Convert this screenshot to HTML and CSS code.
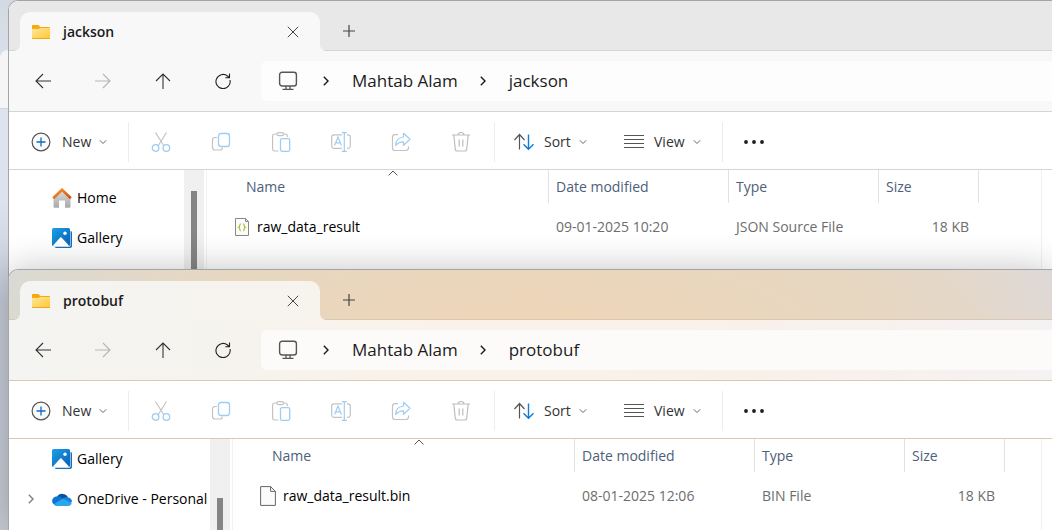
FILE: index.html
```
<!DOCTYPE html>
<html lang="en">
<head>
<meta charset="utf-8">
<title>File Explorer</title>
<link rel="stylesheet" href="styles.css">
</head>
<body>
<svg class="defs" aria-hidden="true">
  <defs>
    <linearGradient id="g-folder" x1="0" y1="0" x2="1" y2="1"><stop offset="0" stop-color="#ffe6a0"/><stop offset="1" stop-color="#ffc82e"/></linearGradient>
    <linearGradient id="g-roof" x1="0" y1="0" x2="1" y2="1"><stop offset="0" stop-color="#f79a2a"/><stop offset="1" stop-color="#d04a12"/></linearGradient>
    <linearGradient id="g-wall" x1="0" y1="0" x2="0" y2="1"><stop offset="0" stop-color="#dcdcdc"/><stop offset="1" stop-color="#a9a9a9"/></linearGradient>
    <linearGradient id="g-photo" x1="0" y1="0" x2="1" y2="1"><stop offset="0" stop-color="#1ba0e8"/><stop offset="1" stop-color="#0a5fb4"/></linearGradient>
  </defs>
  <symbol id="folder" viewBox="0 0 20 16"><path d="M1 2C1 1.400 1.400 1 2 1h5.400c.4 0 .7.400.9.800L9 3h9c.6 0 1 .4 1 1v3H1z" fill="#f6a912"/><path d="M1 5h6.500L9 4h10v10.300c0 .4-.3.700-.7.700H1.700c-.4 0-.7-.3-.7-.7z" fill="url(#g-folder)"/><path d="M1 14h18v.3c0 .4-.3.700-.7.700H1.700c-.4 0-.7-.3-.7-.7z" fill="#eda81c"/></symbol>
  <symbol id="close" viewBox="0 0 12 12"><path d="M.8.800l10.400 10.400M11.200.8L.8 11.200" stroke="#444" stroke-width="1" fill="none"/></symbol>
  <symbol id="plus" viewBox="0 0 12 12"><path d="M6 0v12M0 6h12" stroke="#444" stroke-width="1.200" fill="none"/></symbol>
  <symbol id="back" viewBox="0 0 16 16"><path d="M16 8H1M8 1L1 8l7 7" stroke="currentColor" stroke-width="1.100" fill="none"/></symbol>
  <symbol id="forward" viewBox="0 0 16 16"><path d="M0 8h15M8 1l7 7-7 7" stroke="currentColor" stroke-width="1.100" fill="none"/></symbol>
  <symbol id="up" viewBox="0 0 16 16"><path d="M8 16V1M1 8l7-7 7 7" stroke="currentColor" stroke-width="1.100" fill="none"/></symbol>
  <symbol id="refresh" viewBox="0 0 16 16"><path d="M15 7A7.100 7.100 0 1 1 12.500 3L14.200 4.500M14.500 .5V4.700H10.300" stroke="#222" stroke-width="1.100" fill="none"/></symbol>
  <symbol id="monitor" viewBox="0 0 20 20"><rect x="1.600" y="1.200" width="16.800" height="13.800" rx="2.500" stroke="#555" stroke-width="1.400" fill="none"/><path d="M8 15v3M12 15v3M4.500 18.400h11" stroke="#555" stroke-width="1.300" fill="none"/></symbol>
  <symbol id="crumb" viewBox="0 0 6 10"><path d="M.8.800L5 5 .8 9.200" stroke="currentColor" stroke-width="1.400" fill="none"/></symbol>
  <symbol id="drop" viewBox="0 0 8 6"><path d="M.8 1.300L4 4.500l3.200-3.200" stroke="#666" fill="none"/></symbol>
  <symbol id="add" viewBox="0 0 20 20"><circle cx="10" cy="10" r="8.900" fill="#fafafa" stroke="#555" stroke-width="1.200"/><path d="M10 5.500v9M5.500 10h9" stroke="#0f6cbd" stroke-width="1.300"/></symbol>
  <symbol id="cut" viewBox="0 0 20 20"><path d="M4.500.5L13 14M15.500.5L7 14" stroke="#c3c3c3" stroke-width="1.200"/><circle cx="4.600" cy="16" r="3.300" fill="none" stroke="#9dcdf3" stroke-width="1.300"/><circle cx="15.400" cy="16" r="3.300" fill="none" stroke="#9dcdf3" stroke-width="1.300"/></symbol>
  <symbol id="copy" viewBox="0 0 20 20"><path d="M6 5.500H4a2.500 2.500 0 0 0-2.500 2.500v7.500A2.500 2.500 0 0 0 4 18h5a2.500 2.500 0 0 0 2.500-2.300" fill="none" stroke="#c3c3c3" stroke-width="1.200"/><rect x="7.500" y="1.500" width="11" height="13" rx="2.500" fill="none" stroke="#9dcdf3" stroke-width="1.300"/></symbol>
  <symbol id="paste" viewBox="0 0 20 20"><path d="M7.500 19H3.500A2 2 0 0 1 1.600 17V4A2 2 0 0 1 3.500 2H6M12 2h2.500A2 2 0 0 1 16.400 4v1" fill="none" stroke="#c3c3c3" stroke-width="1.200"/><rect x="6" y=".7" width="6.500" height="3" rx="1.500" fill="none" stroke="#c3c3c3" stroke-width="1.200"/><rect x="9.500" y="6.700" width="9.200" height="12.600" rx="1.500" fill="none" stroke="#9dcdf3" stroke-width="1.300"/></symbol>
  <symbol id="rename" viewBox="0 0 20 20"><path d="M11 2.800H3A2.300 2.300 0 0 0 .7 5v9A2.300 2.300 0 0 0 3 16.300h8M16 2.800h1A2.300 2.300 0 0 1 19.300 5v9a2.300 2.300 0 0 1-2.300 2.300h-1" fill="none" stroke="#c3c3c3" stroke-width="1.200"/><path d="M3.500 13.500L7 5l3.500 8.500M4.800 10.800h4.400M10.800.6h5M10.800 19.400h5M13.300.6v18.800" fill="none" stroke="#9dcdf3" stroke-width="1.200"/></symbol>
  <symbol id="share" viewBox="0 0 20 20"><path d="M7 2.600H4A2.500 2.500 0 0 0 1.500 5v11A2.500 2.500 0 0 0 4 18.500h11a2.500 2.500 0 0 0 2.500-2.400v-1.500" fill="none" stroke="#c3c3c3" stroke-width="1.200"/><path d="M12.500 1.300l6.500 6-6.500 6V9.800c-3.500 0-5.700 1-7.800 3.700 0-4.500 2.800-8 7.800-8.500z" fill="none" stroke="#9dcdf3" stroke-width="1.200" stroke-linejoin="round"/></symbol>
  <symbol id="trash" viewBox="0 0 20 20"><path d="M1 3h18M7 3a3 2.500 0 0 1 6 0M2.800 3l1.500 14.500A2 2 0 0 0 6.300 19h7.400a2 2 0 0 0 2-1.500L17.200 3M8.200 7.500v7M11.800 7.500v7" fill="none" stroke="#bdbdbd" stroke-width="1.200"/></symbol>
  <symbol id="sort" viewBox="0 0 20 20"><path d="M5.500 17.500V2.500M.5 8l5-5.500 5 5.500" fill="none" stroke="#555" stroke-width="1.200"/><path d="M14.500 2.500v15M9.500 12.300l5 5 5-5" fill="none" stroke="#0f7bd8" stroke-width="1.400"/></symbol>
  <symbol id="lines" viewBox="0 0 20 20"><path d="M0 3.500h20M0 7.500h20M0 11.500h20M0 15.500h20" stroke="#555" stroke-width="1.100"/></symbol>
  <symbol id="dots" viewBox="0 0 20 4"><circle cx="2" cy="2" r="1.900"/><circle cx="10" cy="2" r="1.900"/><circle cx="18" cy="2" r="1.900"/></symbol>
  <symbol id="home" viewBox="0 0 20 20"><path d="M1.500 9L10 2l8.500 7v9.500c0 .8-.5 1.300-1.300 1.300H13v-7.300H7v7.300H2.800c-.8 0-1.300-.5-1.300-1.300z" fill="url(#g-wall)"/><path d="M1.200 10.300L10 1.700l8.800 8.600" fill="none" stroke="url(#g-roof)" stroke-width="2.600"/></symbol>
  <symbol id="gallery" viewBox="0 0 20 20"><path d="M4 3h14.500c.9 0 1.500.6 1.500 1.500V18c0 1.200-.8 2-2 2H4.500C3.300 20 2.500 19.200 2.500 18z" fill="#1370c0"/><rect x="0" y="0" width="18.500" height="18.700" rx="1.500" fill="#fff"/><rect x="0" y="0" width="18" height="18" rx="1.500" fill="url(#g-photo)"/><path d="M1 17.500l7-7.800c.5-.6 1.200-.6 1.700 0l7.300 7.800c-.3.300-.7.500-1 .5H2c-.4 0-.8-.2-1-.5z" fill="#fff"/><circle cx="13" cy="5.200" r="1.700" fill="#fff"/></symbol>
  <symbol id="cloud" viewBox="0 0 20 14"><path d="M5 5A6 5.600 0 0 1 16 5.500L10 10z" fill="#0a4fa8"/><path d="M4.800 4.400C7.500 3.600 9 5.200 11 6.400L2.500 12.800C-1.800 10.500.2 4.400 4.800 4.400z" fill="#0f74d1"/><path d="M11 6.400c1.200-1 3-1.400 4.800-1A4.200 4.200 0 0 1 20 9.600L18 12z" fill="#1384dd"/><path d="M1.800 12.200L11 6.400l8.700 4.800c-.4 1.500-1.700 2.800-3.700 2.800H4.500c-1.100 0-2-.6-2.700-1.800z" fill="#2aa6ec"/></symbol>
  <symbol id="file-json" viewBox="0 0 16 20"><path d="M1.500 1.500h10l3 3v14h-13z" fill="#fcfcfc" stroke="#888"/><path d="M11.500 1.500v3h3" fill="none" stroke="#888"/><path d="M6.800 6.800C5.300 6.800 6.300 9.700 4.800 10.200c1.500.5.5 3.800 2 3.800M9.200 6.800c1.500 0 .5 2.900 2 3.400-1.500.5-.5 3.800-2 3.800" fill="none" stroke="#b0b82e" stroke-width="1.200"/></symbol>
  <symbol id="file-blank" viewBox="0 0 16 20"><path d="M.6.600h10l4.800 4.800v14H.6z" fill="#fbfbfb" stroke="#666"/><path d="M10.600.600v4.800h4.800" fill="none" stroke="#666"/></symbol>
  <symbol id="caret" viewBox="0 0 10 6"><path d="M.6 5.400L5 1l4.400 4.400" fill="none" stroke="#555"/></symbol>
</svg>

<div class="behind"></div>

<section class="window window-back" aria-label="jackson">
  <header class="tabs">
    <div class="tab">
      <svg class="i20x16"><use href="#folder"/></svg>
      <span class="tab-title">jackson</span>
      <button class="plain" aria-label="Close tab"><svg class="i12"><use href="#close"/></svg></button>
    </div>
    <button class="plain new-tab" aria-label="New tab"><svg class="i12"><use href="#plus"/></svg></button>
  </header>
  <nav class="navbar" aria-label="Navigation">
    <button class="plain nav-btn" aria-label="Back"><svg class="i16"><use href="#back"/></svg></button>
    <button class="plain nav-btn" aria-label="Forward" disabled><svg class="i16"><use href="#forward"/></svg></button>
    <button class="plain nav-btn" aria-label="Up"><svg class="i16"><use href="#up"/></svg></button>
    <button class="plain nav-btn" aria-label="Refresh"><svg class="i16"><use href="#refresh"/></svg></button>
    <div class="address">
      <svg class="i20"><use href="#monitor"/></svg>
      <svg class="crumb"><use href="#crumb"/></svg>
      <a href="#">Mahtab Alam</a>
      <svg class="crumb"><use href="#crumb"/></svg>
      <a href="#">jackson</a>
    </div>
  </nav>
  <div class="toolbar" role="toolbar" aria-label="Commands">
    <button class="plain cmd cmd-new"><svg class="i20"><use href="#add"/></svg><span>New</span><svg class="drop"><use href="#drop"/></svg></button>
    <div class="actions">
      <button class="plain" aria-label="Cut" disabled><svg class="i20"><use href="#cut"/></svg></button>
      <button class="plain" aria-label="Copy" disabled><svg class="i20"><use href="#copy"/></svg></button>
      <button class="plain" aria-label="Paste" disabled><svg class="i20"><use href="#paste"/></svg></button>
      <button class="plain" aria-label="Rename" disabled><svg class="i20"><use href="#rename"/></svg></button>
      <button class="plain" aria-label="Share" disabled><svg class="i20"><use href="#share"/></svg></button>
      <button class="plain" aria-label="Delete" disabled><svg class="i20"><use href="#trash"/></svg></button>
    </div>
    <div class="arrange">
      <button class="plain cmd"><svg class="i20"><use href="#sort"/></svg><span>Sort</span><svg class="drop"><use href="#drop"/></svg></button>
      <button class="plain cmd"><svg class="i20"><use href="#lines"/></svg><span>View</span><svg class="drop"><use href="#drop"/></svg></button>
    </div>
    <button class="plain more" aria-label="More"><svg class="dots"><use href="#dots"/></svg></button>
  </div>
  <div class="body">
    <aside class="side side-top">
      <a class="place" href="#"><i></i><svg class="i20"><use href="#home"/></svg>Home</a>
      <a class="place" href="#"><i></i><svg class="i20"><use href="#gallery"/></svg>Gallery</a>
    </aside>
    <div class="scroll"><div class="thumb"></div></div>
    <main class="files">
      <table>
        <thead><tr><th class="c-name">Name<svg class="caret"><use href="#caret"/></svg></th><th class="c-date">Date modified</th><th class="c-type">Type</th><th class="c-size">Size</th></tr></thead>
        <tbody><tr><td class="c-name"><div class="file"><svg class="i16x20"><use href="#file-json"/></svg>raw_data_result</div></td><td>09-01-2025 10:20</td><td>JSON Source File</td><td class="num">18 KB</td></tr></tbody>
      </table>
    </main>
    <div class="pane"></div>
  </div>
</section>

<section class="window window-front" aria-label="protobuf">
  <header class="tabs">
    <div class="tab">
      <svg class="i20x16"><use href="#folder"/></svg>
      <span class="tab-title">protobuf</span>
      <button class="plain" aria-label="Close tab"><svg class="i12"><use href="#close"/></svg></button>
    </div>
    <button class="plain new-tab" aria-label="New tab"><svg class="i12"><use href="#plus"/></svg></button>
  </header>
  <nav class="navbar" aria-label="Navigation">
    <button class="plain nav-btn" aria-label="Back"><svg class="i16"><use href="#back"/></svg></button>
    <button class="plain nav-btn" aria-label="Forward" disabled><svg class="i16"><use href="#forward"/></svg></button>
    <button class="plain nav-btn" aria-label="Up"><svg class="i16"><use href="#up"/></svg></button>
    <button class="plain nav-btn" aria-label="Refresh"><svg class="i16"><use href="#refresh"/></svg></button>
    <div class="address">
      <svg class="i20"><use href="#monitor"/></svg>
      <svg class="crumb"><use href="#crumb"/></svg>
      <a href="#">Mahtab Alam</a>
      <svg class="crumb"><use href="#crumb"/></svg>
      <a href="#">protobuf</a>
    </div>
  </nav>
  <div class="toolbar" role="toolbar" aria-label="Commands">
    <button class="plain cmd cmd-new"><svg class="i20"><use href="#add"/></svg><span>New</span><svg class="drop"><use href="#drop"/></svg></button>
    <div class="actions">
      <button class="plain" aria-label="Cut" disabled><svg class="i20"><use href="#cut"/></svg></button>
      <button class="plain" aria-label="Copy" disabled><svg class="i20"><use href="#copy"/></svg></button>
      <button class="plain" aria-label="Paste" disabled><svg class="i20"><use href="#paste"/></svg></button>
      <button class="plain" aria-label="Rename" disabled><svg class="i20"><use href="#rename"/></svg></button>
      <button class="plain" aria-label="Share" disabled><svg class="i20"><use href="#share"/></svg></button>
      <button class="plain" aria-label="Delete" disabled><svg class="i20"><use href="#trash"/></svg></button>
    </div>
    <div class="arrange">
      <button class="plain cmd"><svg class="i20"><use href="#sort"/></svg><span>Sort</span><svg class="drop"><use href="#drop"/></svg></button>
      <button class="plain cmd"><svg class="i20"><use href="#lines"/></svg><span>View</span><svg class="drop"><use href="#drop"/></svg></button>
    </div>
    <button class="plain more" aria-label="More"><svg class="dots"><use href="#dots"/></svg></button>
  </div>
  <div class="body">
    <aside class="side side-wide">
      <a class="place" href="#"><i></i><svg class="i20"><use href="#gallery"/></svg>Gallery</a>
      <a class="place" href="#"><i><svg class="crumb grey"><use href="#crumb"/></svg></i><svg class="i20x14"><use href="#cloud"/></svg>OneDrive - Personal</a>
    </aside>
    <div class="scroll scroll-low"><div class="thumb"></div></div>
    <main class="files">
      <table>
        <thead><tr><th class="c-name">Name<svg class="caret"><use href="#caret"/></svg></th><th class="c-date">Date modified</th><th class="c-type">Type</th><th class="c-size">Size</th></tr></thead>
        <tbody><tr><td class="c-name"><div class="file"><svg class="i16x20"><use href="#file-blank"/></svg>raw_data_result.bin</div></td><td>08-01-2025 12:06</td><td>BIN File</td><td class="num">18 KB</td></tr></tbody>
      </table>
    </main>
    <div class="pane"></div>
  </div>
</section>
</body>
</html>
```

FILE: styles.css
```
* { box-sizing: border-box; }

body {
  margin: 0;
  height: 100vh;
  position: relative;
  overflow: hidden;
  background: linear-gradient(#d3dae2 0, #dde4ee 110px, #dce3ee 200px, #c4cad6 300px, #c6cad4 100%);
  font-family: "Open Sans", "Noto Sans", sans-serif;
  font-size: 14px;
  line-height: 20px;
  color: #1b1b1b;
}

svg { display: block; flex: none; }
a { color: inherit; text-decoration: none; }
.defs { position: absolute; width: 0; height: 0; }

.i12 { width: 12px; height: 12px; }
.i16 { width: 16px; height: 16px; }
.i20 { width: 20px; height: 20px; }
.i20x16 { width: 20px; height: 16px; }
.i20x14 { width: 20px; height: 14px; }
.i16x20 { width: 16px; height: 20px; }

.plain {
  margin: 0;
  padding: 0;
  border: 0;
  background: none;
  font: inherit;
  color: #333;
  display: flex;
  align-items: center;
  justify-content: center;
}

/* Window partly hidden at the left edge of the desktop */
.behind {
  position: absolute;
  left: 0;
  top: 50px;
  width: 40px;
  height: 59px;
  background: #f5f5f6;
  border-bottom: 1px solid #cfd3da;
  border-radius: 8px 0 0 0;
}

.window {
  position: absolute;
  left: 8px;
  right: 0;
  bottom: 0;
  display: flex;
  flex-direction: column;
  border: solid #a3a5ab;
  border-width: 1px 0 0 1px;
  border-radius: 10px 0 0 0;
  overflow: hidden;
  background: #fff;
  --strip: #e8e8e8;
  --tab: #f8f8f8;
  --tab-end: #f8f8f8;
  --chrome: #f8f8f8;
  --field: #fdfdfd;
  --rule: #d5d5d5;
}
.window-back { top: 0; }
.window-front {
  top: 269px;
  box-shadow: 0 0 36px rgba(0, 0, 0, 0.24);
  --strip: radial-gradient(ellipse 560px 160px at 50% 120%, #efd5b6 0%, #e8d7c0 55%, transparent 100%), linear-gradient(90deg, #d8dad5 0, #dddad0 120px, #e5d8c4 320px, #e8d6bd 65%, #ded9d8 100%);
  --tab: #f4f4f2;
  --tab-end: #f7f3ed;
  --chrome: linear-gradient(90deg, #f4f4f2 0, #f5f3ee 200px, #faf2ea 40%, #f9f0ea 72%, #f5f2f3 100%);
  --field: #fcfbfa;
  --rule: #d8c8b4;
}

.tabs {
  display: flex;
  height: 50px;
  padding: 11px 0 0 11px;
  background: var(--strip);
  border-bottom: 1px solid var(--rule);
}
.tab {
  position: relative;
  width: 300px;
  margin-bottom: -1px;
  padding: 0 21px 0 11px;
  display: flex;
  align-items: center;
  background: linear-gradient(90deg, var(--tab), var(--tab-end));
  border-radius: 10px 10px 0 0;
}
/* Flared feet where the tab meets the navigation bar */
.tab::before,
.tab::after {
  content: "";
  position: absolute;
  bottom: 0;
  width: 5px;
  height: 5px;
}
.tab::before {
  right: 100%;
  background: radial-gradient(circle at 0 0, transparent 4px, var(--tab) 5px);
}
.tab::after {
  left: 100%;
  background: radial-gradient(circle at 100% 0, transparent 4px, var(--tab-end) 5px);
}
.tab-title {
  flex: 1;
  margin-left: 12px;
  font-weight: 600;
}
.new-tab { width: 58px; }

.navbar {
  display: flex;
  align-items: center;
  height: 61px;
  padding-left: 4px;
  background: var(--chrome);
  border-bottom: 1px solid var(--rule);
}
.nav-btn { width: 60px; height: 40px; }
.nav-btn:disabled { color: #b5b5b5; }
.address {
  flex: 1;
  height: 40px;
  margin-left: 8px;
  padding-left: 17px;
  display: flex;
  align-items: center;
  background: var(--field);
  border-radius: 6px 0 0 6px;
  font-size: 17px;
}
.crumb { width: 6px; height: 10px; }
.address .crumb { margin: 0 23px 0 25px; }
.address .crumb + a + .crumb { margin-left: 22px; }

.toolbar {
  display: flex;
  align-items: center;
  height: 58px;
  padding: 2px 0 0 22px;
  border-bottom: 1px solid var(--rule);
}
.cmd { justify-content: flex-start; height: 40px; }
.cmd span { margin: 0 8px 0 10px; }
.drop { width: 8px; height: 6px; }
.cmd-new { width: 97px; }
.cmd-new span { margin-left: 11px; }
.actions {
  display: flex;
  padding: 0 3px 0 2px;
  border: solid #ededed;
  border-width: 0 1px;
}
.actions .plain { width: 60px; height: 40px; }
.arrange {
  display: flex;
  padding-left: 19px;
  border-right: 1px solid #ededed;
}
.arrange .cmd { width: 110px; }
.arrange .cmd + .cmd { width: 98px; }
.more { width: 61px; height: 40px; }
.dots { width: 20px; height: 4px; fill: #1b1b1b; }

.body { flex: 1; display: flex; min-height: 0; color: #000; }
.side { width: 175px; overflow: hidden; }
.side-top { padding-top: 8px; }
.side-wide { width: 201px; }
.place {
  height: 40px;
  display: flex;
  align-items: center;
  gap: 5px;
  white-space: nowrap;
}
.place i { width: 38px; padding-left: 19px; }
.grey { color: #808080; }

.scroll {
  width: 20px;
  padding: 21px 7px 0;
  background: #f0f0f0;
}
.scroll-low { padding-top: 59px; }
.thumb { height: 100%; background: #858585; }

.files {
  flex: 1;
  margin-left: 2px;
  border-left: 1px solid #f2f2f2;
}
table { border-spacing: 0; table-layout: fixed; width: 772px; }
th, td { padding: 0 8px 0 7px; text-align: left; font-weight: 400; }
th {
  height: 33px;
  color: #4c607a;
  border-right: 1px solid #e2e2e2;
  position: relative;
}
td { height: 48px; color: #6d6d6d; }
th.c-name { width: 342px; padding-left: 39px; }
.c-date { width: 180px; }
.c-type { width: 150px; }
.c-size { width: 100px; }
td.c-name { padding-left: 27px; color: #000; }
.file { display: flex; align-items: center; gap: 7px; }
td.num { text-align: right; padding-right: 10px; }
.caret {
  position: absolute;
  left: 181px;
  top: 0;
  width: 10px;
  height: 6px;
}
.pane { width: 11px; border-left: 1px solid #f0f0f0; }
```
